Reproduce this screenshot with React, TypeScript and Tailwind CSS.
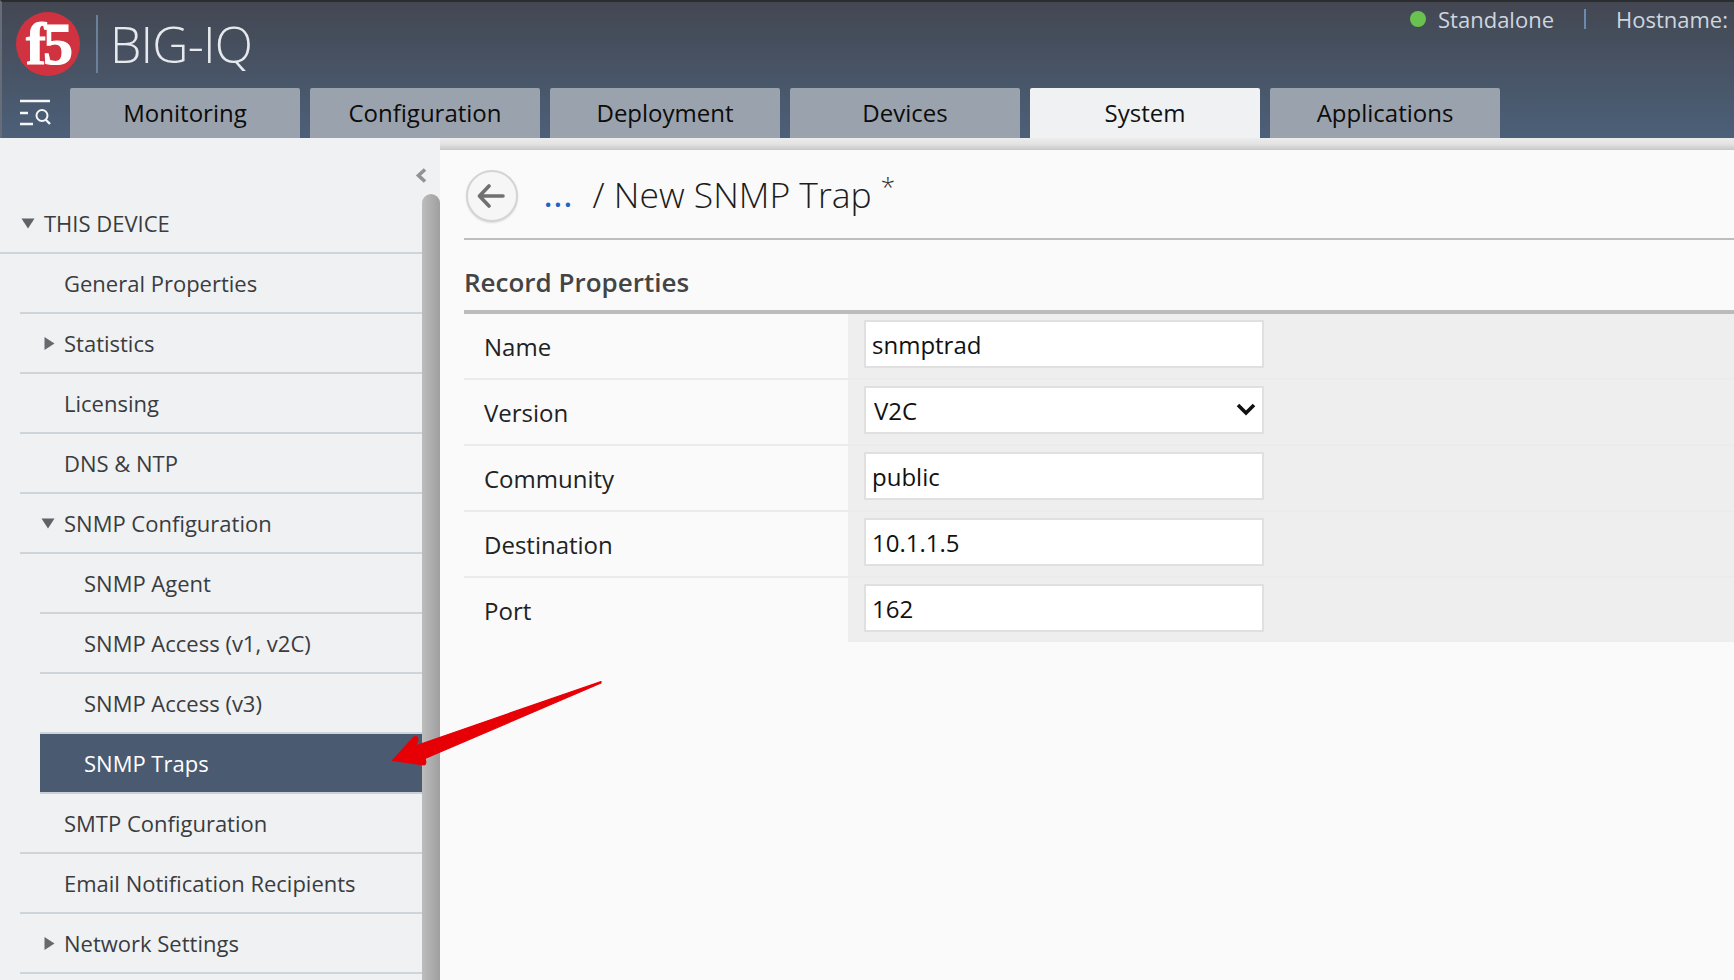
import React from "react";

const tabs = ["Monitoring", "Configuration", "Deployment", "Devices", "System", "Applications"];

type Item = { label: string; level: 0 | 1 | 2; caret?: "down" | "right"; active?: boolean };

const items: Item[] = [
  { label: "THIS DEVICE", level: 0, caret: "down" },
  { label: "General Properties", level: 1 },
  { label: "Statistics", level: 1, caret: "right" },
  { label: "Licensing", level: 1 },
  { label: "DNS & NTP", level: 1 },
  { label: "SNMP Configuration", level: 1, caret: "down" },
  { label: "SNMP Agent", level: 2 },
  { label: "SNMP Access (v1, v2C)", level: 2 },
  { label: "SNMP Access (v3)", level: 2 },
  { label: "SNMP Traps", level: 2, active: true },
  { label: "SMTP Configuration", level: 1 },
  { label: "Email Notification Recipients", level: 1 },
  { label: "Network Settings", level: 1, caret: "right" },
];

function Caret({ dir }: { dir: "down" | "right" }) {
  return dir === "down" ? (
    <svg width="14" height="11" viewBox="0 0 14 11" className="absolute left-[-23px] top-[6px]">
      <path d="M0.5 0.5H13.5L7 10.5Z" fill="#5f6266" />
    </svg>
  ) : (
    <svg width="11" height="13" viewBox="0 0 11 13" className="absolute left-[-20px] top-[5px]">
      <path d="M0.5 0L10.5 6.5L0.5 13Z" fill="#66696d" />
    </svg>
  );
}

function NavRow({ item }: { item: Item }) {
  const margin = item.level === 0 ? "ml-0" : item.level === 1 ? "ml-[20px]" : "ml-[40px]";
  const colors = item.active
    ? "bg-[#4a5a70] text-white border-[#c9d0d7]"
    : "text-[#3a3c40] border-[#cdd4da]";
  return (
    <div className={`${margin} ${colors} relative flex h-[60px] items-center border-b-2 pl-[44px] text-[22px] leading-none`}>
      <span className="relative">
        {item.caret && <Caret dir={item.caret} />}
        {item.label}
      </span>
    </div>
  );
}

const fields = [
  { label: "Name", value: "snmptrad" },
  { label: "Version", value: "V2C", select: true },
  { label: "Community", value: "public" },
  { label: "Destination", value: "10.1.1.5" },
  { label: "Port", value: "162" },
];

export default function App() {
  return (
    <div
      className="relative h-[980px] w-[1734px] overflow-hidden bg-[#fafafa]"
      style={{ fontFamily: '"Open Sans", "Noto Sans", sans-serif' }}
    >
      {/* Header */}
      <header className="flex h-[138px] flex-col border-t-2 border-l-2 border-t-[#2c2c2e] border-l-[#666d79] bg-gradient-to-b from-[#434752] to-[#4c6079]">
        <div className="flex h-[86px] items-start justify-between">
          <div className="flex items-center pl-[14px] pt-[10px]">
            <div className="relative flex h-[64px] w-[64px] items-center justify-center overflow-hidden rounded-full bg-[#d0323f]">
              <span
                className="text-[60px] font-bold leading-none tracking-[-3px] text-white [-webkit-text-stroke:1.2px_white]"
                style={{ fontFamily: '"Liberation Serif", serif' }}
              >
                f5
              </span>
            </div>
            <div className="ml-[16px] h-[58px] w-[2px] bg-[#6b8099]" />
            <div className="ml-[12px] text-[50px] font-light leading-none tracking-[-0.8px] text-[#e6e9ed]">BIG-IQ</div>
          </div>
          <div className="flex items-center pt-[2px] pr-[6px] text-[22px] leading-[30px] text-[#cfd6df]">
            <span className="mr-[12px] h-[16px] w-[16px] rounded-full bg-[#69c24f]" />
            <span>Standalone</span>
            <span className="mx-[30px] h-[20px] w-[2px] bg-[#6b8ab0]" />
            <span>Hostname:</span>
          </div>
        </div>
        <div className="flex h-[50px]">
          <div className="flex w-[68px] items-center pl-[18px]">
            <svg width="32" height="28" viewBox="0 0 32 28" fill="none" stroke="#f4f6f8" strokeWidth="2.4">
              <path d="M0 2H30M0 14H8M0 25H13" />
              <circle cx="22" cy="16.5" r="5.5" strokeWidth="2" />
              <path d="M25.5 20.5L30 25" />
            </svg>
          </div>
          <nav className="flex gap-[10px]">
            {tabs.map((t) => (
              <div
                key={t}
                className={`flex h-[50px] w-[230px] items-center justify-center rounded-t-[2px] text-[24px] leading-none ${
                  t === "System" ? "bg-[#f0f1f3] text-[#111]" : "bg-[#9aa3ad] text-[#0c0c0c]"
                }`}
              >
                {t}
              </div>
            ))}
          </nav>
        </div>
      </header>

      {/* Body */}
      <div className="flex h-[842px]">
        {/* Sidebar */}
        <aside className="flex w-[440px] shrink-0 bg-[#eff1f3]">
          <div className="w-[422px] shrink-0">
            <div className="flex h-[56px] items-start justify-end pt-[30px]">
              <svg width="12" height="15" viewBox="0 0 12 15" className="mr-[-5px]" fill="none" stroke="#8f9296" strokeWidth="3.6">
                <path d="M10 1.5L3.5 7.5L10 13.5" />
              </svg>
            </div>
            {items.map((it) => (
              <NavRow key={it.label} item={it} />
            ))}
          </div>
          <div className="flex-1 pt-[56px]">
            <div className="h-full rounded-t-[9px] bg-gradient-to-r from-[#bdbdbd] to-[#9f9f9f]" />
          </div>
        </aside>

        {/* Main */}
        <main className="min-w-0 flex-1">
          <div className="h-[12px] bg-gradient-to-b from-[#ececed] via-[#e3e3e4] to-[#c6c7c8]" />
          <div className="pl-[24px]">
            <div className="flex h-[90px] items-start border-b-2 border-[#bdbdbd] pt-[20px]">
              <div className="ml-[2px] flex h-[52px] w-[52px] items-center justify-center rounded-full border-2 border-[#d4d4d4] bg-[#f6f6f6] shadow-[0_1px_2px_rgba(0,0,0,0.12)]">
                <svg width="28" height="24" viewBox="0 0 28 24" fill="none" stroke="#707070" strokeWidth="3.6" strokeLinecap="round" strokeLinejoin="round" className="ml-[-2px]">
                  <path d="M26 12H3M12 2L2.5 12L12 22" />
                </svg>
              </div>
              <div className="ml-[26px] flex items-start font-light leading-none text-[#1c1c1c]">
                <span className="mt-[11px] text-[30px] font-semibold tracking-[1.6px] text-[#1d63c8]">...</span>
                <span className="ml-[19px] mt-[7px] text-[35.5px]">/ New SNMP Trap</span>
                <span className="ml-[9px] mt-[3px] text-[26px] text-[#333]">*</span>
              </div>
            </div>
            <div className="flex h-[74px] items-end border-b-[4px] border-[#bbbbbb] pb-[8px] text-[26px] font-semibold leading-[40px] text-[#444444]">
              Record Properties
            </div>
            {fields.map((f, i) => (
              <div key={f.label} className={`flex ${i < fields.length - 1 ? "h-[66px] border-b-2 border-[#ebebeb]" : "h-[64px]"}`}>
                <div className="flex w-[384px] shrink-0 items-center pl-[20px] pt-[2px] text-[24px] leading-none text-[#222]">{f.label}</div>
                <div className="flex-1 bg-[#eeeeee] pl-[16px] pt-[6px]">
                  {f.select ? (
                    <div className="relative h-[48px] w-[400px]">
                      <select
                        defaultValue={f.value}
                        className="h-full w-full appearance-none border-2 border-[#e0e0e0] bg-white pl-[8px] pt-[1px] text-[24px] text-[#111] outline-none"
                      >
                        <option>{f.value}</option>
                      </select>
                      <svg width="20" height="14" viewBox="0 0 20 14" className="absolute right-[8px] top-[17px]" fill="none" stroke="#111" strokeWidth="3.6">
                        <path d="M2 2L10 10L18 2" />
                      </svg>
                    </div>
                  ) : (
                    <input
                      readOnly
                      value={f.value}
                      className="block h-[48px] w-[400px] border-2 border-[#e0e0e0] bg-white pl-[6px] text-[24px] text-[#111] outline-none"
                    />
                  )}
                </div>
              </div>
            ))}
          </div>
        </main>
      </div>

      {/* Annotation arrow */}
      <svg className="pointer-events-none absolute left-0 top-0" width="1734" height="980" viewBox="0 0 1734 980">
        <path
          d="M601 681.5L601 683L425 758.5Q427 764 424 765L392.5 760.5L414 737Q418 735 418 741L415 746Z"
          fill="#e60006"
          stroke="#e60006"
          strokeWidth="1.2"
          strokeLinejoin="round"
        />
      </svg>
    </div>
  );
}
